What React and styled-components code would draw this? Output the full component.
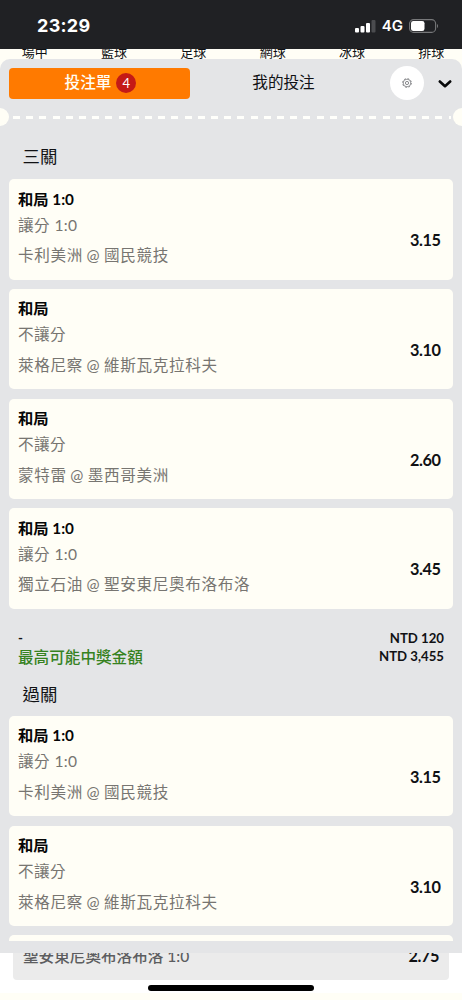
import React from "react";
import styled, { createGlobalStyle } from "styled-components";

const GlobalStyle = createGlobalStyle`
  * {
    box-sizing: border-box;
  }
  body {
    margin: 0;
    background: #fffef6;
    color: #101114;
    font-family: Lato, "Noto Sans CJK TC", sans-serif;
  }
`;

const Screen = styled.div`
  width: 462px;
  height: 1000px;
  overflow: hidden;
  display: flex;
  flex-direction: column;
`;

const StatusBar = styled.header`
  flex: none;
  height: 49px;
  padding: 2px 23px 0 37px;
  display: flex;
  align-items: center;
  justify-content: space-between;
  background: #202124;
  color: white;
  font-family: Inter, sans-serif;
`;

const Clock = styled.span`
  font-size: 18px;
  font-weight: 700;
  letter-spacing: 0.3px;
`;

const StatusIcons = styled.div`
  display: flex;
  align-items: center;
  gap: 6px;
`;

const Network = styled.span`
  font-size: 15px;
  font-weight: 600;
`;

const Sports = styled.nav`
  flex: none;
  height: 10px;
  width: 476px;
  margin-left: -5px;
  display: grid;
  grid-template-columns: repeat(6, 1fr);
  grid-template-rows: 10px;
  align-items: end;
  overflow: hidden;
`;

const Sport = styled.span`
  font-size: 13px;
  line-height: 13px;
  text-align: center;
`;

const Sheet = styled.main`
  flex: none;
  height: 894px;
  display: flex;
  flex-direction: column;
  padding-bottom: 12px;
  background: #e4e5e7;
  border-radius: 10px 10px 0 0;
`;

const TabBar = styled.div`
  flex: none;
  height: 49px;
  padding: 0 9px;
  display: flex;
  align-items: center;
`;

const Tab = styled.button`
  width: ${(props) => (props.$active ? "181px" : "187px")};
  height: 31px;
  padding: 0 0 1px;
  display: flex;
  align-items: center;
  justify-content: center;
  gap: 5px;
  border: 0;
  border-radius: 4px;
  background: ${(props) => (props.$active ? "#ff7a00" : "transparent")};
  color: ${(props) => (props.$active ? "#fffef6" : "#101114")};
  font-family: inherit;
  font-size: 15.6px;
  font-weight: ${(props) => (props.$active ? 500 : 400)};
  line-height: 22px;
`;

const TabText = styled.span`
  margin-top: -2px;
`;

const Badge = styled.span`
  width: 20px;
  height: 20px;
  margin-right: -2px;
  border-radius: 50%;
  background: #c41a16;
  color: white;
  font-size: 13px;
  font-weight: 400;
  line-height: 21px;
  text-align: center;
`;

const RoundButton = styled.button`
  width: 34px;
  height: 34px;
  margin: -1px 14px 0 13px;
  padding: 0;
  display: flex;
  align-items: center;
  justify-content: center;
  border: 0;
  border-radius: 50%;
  background: white;
`;

const Tear = styled.div`
  flex: none;
  height: 18px;
  display: flex;
  align-items: center;
  justify-content: space-between;
`;

const Notch = styled.span`
  width: 9px;
  height: 18px;
  background: #fffef6;
  border-radius: ${(props) => (props.$right ? "9px 0 0 9px" : "0 9px 9px 0")};
`;

const Dashes = styled.span`
  width: 440px;
  height: 3px;
  background: repeating-linear-gradient(
    90deg,
    transparent 0 2px,
    #fffffb 2px 9px,
    transparent 9px 13.2px
  );
`;

const Slip = styled.div`
  flex: 1;
  min-height: 0;
  padding: 0 9px;
  overflow: hidden;
`;

const Heading = styled.h2`
  margin: 0;
  padding: ${(props) => (props.$first ? "18px" : "17px")} 13.5px
    ${(props) => (props.$first ? "10px" : "9px")};
  font-size: 17.4px;
  font-weight: 400;
  line-height: 25px;
`;

const List = styled.div`
  display: flex;
  flex-direction: column;
  gap: 9.3px;
`;

const Card = styled.article`
  flex: none;
  height: 100.5px;
  padding: 7.5px 12.5px 0 9px;
  display: flex;
  justify-content: space-between;
  background: #fffef6;
  border-radius: 5px;
`;

const Pick = styled.div`
  font-size: 15.3px;
  font-weight: 700;
  line-height: 24px;
  color: #060606;
`;

const Market = styled.div`
  margin-top: 2px;
  font-size: 15.6px;
  letter-spacing: 0.4px;
  line-height: 24px;
  color: #777571;
`;

const Teams = styled(Market)`
  margin-top: 6.5px;
  letter-spacing: 0.65px;
  word-spacing: -1px;
`;

const Odds = styled.div`
  margin-top: 41.5px;
  font-size: 16.3px;
  font-weight: 700;
  letter-spacing: -0.4px;
  line-height: 24px;
`;

const Totals = styled.div`
  height: 56px;
  padding: 20px 9px 0;
  display: flex;
  justify-content: space-between;
  font-size: 13.2px;
  font-weight: 700;
  line-height: 18.5px;
`;

const Amounts = styled.div`
  text-align: right;
`;

const MaxWin = styled.div`
  font-size: 15.6px;
  font-weight: 500;
  line-height: 20px;
  color: #36821f;
`;

const Page = styled.div`
  flex: none;
  height: 40px;
  padding: 0 13px;
  background: white;
`;

const PageCard = styled.div`
  height: 27px;
  padding: 0 10px 12px;
  display: flex;
  align-items: flex-end;
  justify-content: space-between;
  overflow: hidden;
  border-radius: 0 0 4px 4px;
  background: #ebebeb;
  font-size: 15.6px;
  line-height: 24px;
`;

const PagePick = styled.span`
  font-weight: 500;
  color: #5c5d60;
`;

const PageOdds = styled.span`
  font-size: 16.3px;
  font-weight: 700;
  letter-spacing: -0.4px;
`;

const HomeBar = styled.div`
  width: 166px;
  height: 6px;
  margin: 5px auto 0;
  border-radius: 3px;
  background: black;
`;

const sports = ["場中", "籃球", "足球", "網球", "冰球", "排球"];

const bets = [
  { pick: "和局 1:0", market: "讓分 1:0", teams: "卡利美洲 @ 國民競技", odds: "3.15" },
  { pick: "和局", market: "不讓分", teams: "萊格尼察 @ 維斯瓦克拉科夫", odds: "3.10" },
  { pick: "和局", market: "不讓分", teams: "蒙特雷 @ 墨西哥美洲", odds: "2.60" },
  { pick: "和局 1:0", market: "讓分 1:0", teams: "獨立石油 @ 聖安東尼奧布洛布洛", odds: "3.45" },
];

const SignalIcon = () => (
  <svg width="21" height="14" viewBox="0 0 21 14" fill="white">
    <rect x="0" y="9" width="4" height="4.5" rx="1" />
    <rect x="5.5" y="7" width="4" height="6.5" rx="1" />
    <rect x="11" y="4" width="4" height="9.5" rx="1" />
    <rect x="16.5" y="1" width="4" height="12.5" rx="1" fill="#4b4c4f" />
  </svg>
);

const BatteryIcon = () => (
  <svg width="30" height="14" viewBox="0 0 30 14">
    <rect x="0.6" y="0.6" width="26" height="12.8" rx="4" fill="none" stroke="#77787a" strokeWidth="1.1" />
    <rect x="2" y="2" width="13.5" height="10" rx="2.3" fill="white" />
    <path d="M28 5v4c1.4-.5 1.4-3.5 0-4z" fill="#77787a" />
  </svg>
);

const GearIcon = () => (
  <svg width="10" height="10" viewBox="0 0 10 10" fill="none" stroke="#6d6e72">
    <circle cx="5" cy="5" r="3.8" strokeWidth="0.7" />
    <circle cx="5" cy="5" r="4.4" strokeWidth="0.8" strokeDasharray="1.73 1.73" />
    <circle cx="5" cy="5" r="1.6" strokeWidth="0.8" />
  </svg>
);

const ChevronIcon = () => (
  <svg width="14" height="9" viewBox="0 0 14 9" fill="none" stroke="#08090b" strokeWidth="2.6" strokeLinecap="round" strokeLinejoin="round">
    <path d="M1.8 2.5 7 7.2 12.2 2.5" />
  </svg>
);

const BetList = ({ items }) => (
  <List>
    {items.map((bet) => (
      <Card key={bet.teams}>
        <div>
          <Pick>{bet.pick}</Pick>
          <Market>{bet.market}</Market>
          <Teams>{bet.teams}</Teams>
        </div>
        <Odds>{bet.odds}</Odds>
      </Card>
    ))}
  </List>
);

const App = () => {
  return (
    <Screen>
      <GlobalStyle />
      <StatusBar>
        <Clock>23:29</Clock>
        <StatusIcons>
          <SignalIcon />
          <Network>4G</Network>
          <BatteryIcon />
        </StatusIcons>
      </StatusBar>
      <Sports>
        {sports.map((sport) => (
          <Sport key={sport}>{sport}</Sport>
        ))}
      </Sports>
      <Sheet>
        <TabBar>
          <Tab $active>
            <TabText>投注單</TabText>
            <Badge>4</Badge>
          </Tab>
          <Tab>
            <TabText>我的投注</TabText>
          </Tab>
          <RoundButton>
            <GearIcon />
          </RoundButton>
          <ChevronIcon />
        </TabBar>
        <Tear>
          <Notch />
          <Dashes />
          <Notch $right />
        </Tear>
        <Slip>
          <Heading $first>三關</Heading>
          <BetList items={bets} />
          <Totals>
            <div>
              <div>-</div>
              <MaxWin>最高可能中獎金額</MaxWin>
            </div>
            <Amounts>
              <div>NTD 120</div>
              <div>NTD 3,455</div>
            </Amounts>
          </Totals>
          <Heading>過關</Heading>
          <BetList items={bets.slice(0, 3)} />
        </Slip>
      </Sheet>
      <Page>
        <PageCard>
          <PagePick>聖安東尼奧布洛布洛 1:0</PagePick>
          <PageOdds>2.75</PageOdds>
        </PageCard>
        <HomeBar />
      </Page>
    </Screen>
  );
};

export default App;
